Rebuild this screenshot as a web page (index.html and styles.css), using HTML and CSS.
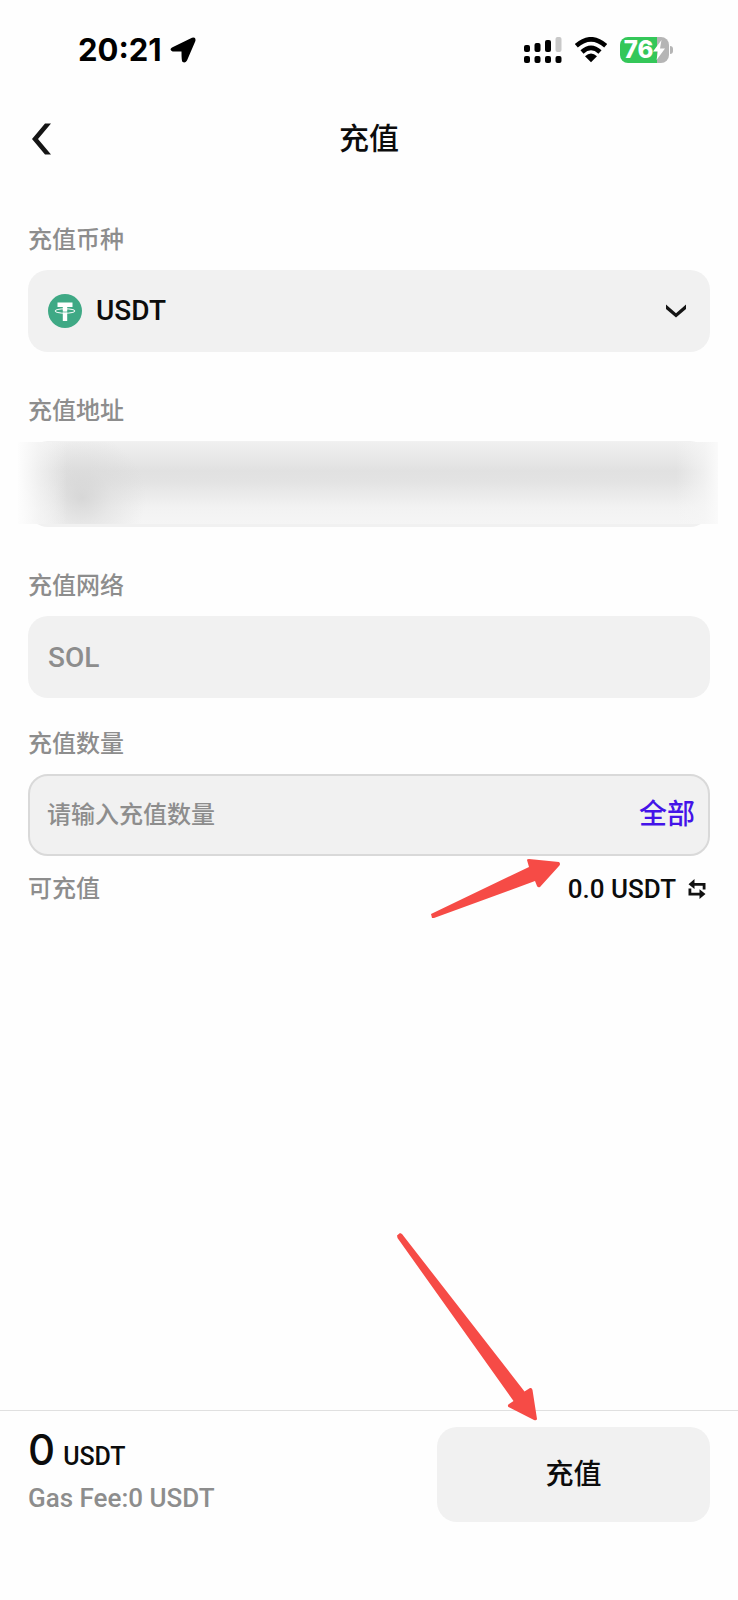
FILE: index.html
```html
<!DOCTYPE html>
<html lang="zh-CN">
<head>
<meta charset="utf-8">
<meta name="viewport" content="width=device-width, initial-scale=1">
<title>充值</title>
<link rel="stylesheet" href="styles.css">
</head>
<body>
<div class="page">
  <div class="status">
    <div class="status-left">
      <span>20:21</span>
      <svg width="26" height="26" viewBox="0 0 26 26" aria-hidden="true"><path d="M2 10.500 22 .8Q26.200-.3 25.400 4L17 23.600Q15 26.600 12.400 24.800Q11.500 24 11.500 14.500H2.600Q-1.200 13 2 10.500Z"/></svg>
    </div>
    <div class="status-right">
      <svg width="38" height="26" viewBox="0 0 38 26" aria-hidden="true">
        <rect x="0" y="8" width="6" height="7" rx="2"/><rect x="10.500" y="6" width="6" height="9" rx="2"/><rect x="21" y="3" width="6" height="12" rx="2"/><rect x="31.500" y="0" width="6" height="15" rx="2" fill="#c8c8c8"/>
        <rect x="0" y="19" width="6" height="7" rx="2"/><rect x="10.500" y="19" width="6" height="7" rx="2"/><rect x="21" y="19" width="6" height="7" rx="2"/><rect x="31.500" y="19" width="6" height="7" rx="2"/>
      </svg>
      <svg width="34" height="26" viewBox="0 0 34 26" aria-hidden="true">
        <path d="M2.300 8.800Q17-4.200 31.700 8.800M8 15Q17 6.800 26 15" fill="none" stroke="#000" stroke-width="4.600"/>
        <path d="M11 19.200Q17 14 23 19.200L17 25.200Z"/>
      </svg>
      <div class="battery">
        <span class="battery-body">76<svg width="12" height="20" viewBox="0 0 12 20" aria-hidden="true"><path d="M8.500 0 0 11.500H5L3.500 20 12 8.500H7Z" fill="#fff"/></svg></span>
        <span class="battery-tip"></span>
      </div>
    </div>
  </div>

  <header class="header">
    <button class="back" type="button" aria-label="返回"><svg width="20" height="32" viewBox="0 0 20 32" aria-hidden="true"><path d="M13 .5H19L6 16 19 31.500H13L0 16Z" fill="#151515"/></svg></button>
    <h1 class="title">充值</h1>
  </header>

  <main class="form">
    <div class="group">
      <label class="label" for="coin">充值币种</label>
      <div class="field coin-field">
        <svg width="34" height="34" viewBox="0 0 34 34" aria-hidden="true">
          <circle cx="17" cy="17" r="17" fill="#3fa985"/>
          <path d="M9.500 8.500H24.500V13H19.200V27H14.800V13H9.500Z" fill="#fff"/>
          <ellipse cx="17" cy="17" rx="10" ry="2.200" fill="none" stroke="#fff"/>
          <path d="M13.500 17.800Q17 18.300 20.500 17.800" fill="none" stroke="#3fa985" stroke-width=".7"/>
        </svg>
        <select class="control select" id="coin"><option>USDT</option></select>
        <svg class="chevron" width="20" height="14" viewBox="0 0 20 14" aria-hidden="true"><path d="M0 .5 10 9.200 20 .5V5L10 13.500 0 5Z" fill="#151515"/></svg>
      </div>
    </div>

    <div class="group">
      <label class="label" for="address">充值地址</label>
      <div class="field address-field">
        <input class="control" id="address" type="text" readonly>
        <div class="mask"></div>
      </div>
    </div>

    <div class="group">
      <label class="label" for="network">充值网络</label>
      <div class="field">
        <input class="control muted" id="network" type="text" value="SOL" readonly>
      </div>
    </div>

    <div class="group amount-group">
      <label class="label" for="amount">充值数量</label>
      <div class="field amount-field">
        <input class="control amount" id="amount" type="text" inputmode="decimal" placeholder="请输入充值数量">
        <button class="all" type="button">全部</button>
      </div>
      <div class="balance">
        <span class="label">可充值</span>
        <button class="available" type="button">
          <span>0.0 USDT</span>
          <svg width="18" height="20" viewBox="0 0 18 20" aria-hidden="true"><path d="M6.500 0V4H17.500V10.500H14.700V6.700H6.500V10L.5 5.200ZM.5 9.500H3.300V13.700H11.500V10.200L17.500 15 11.500 20V16.500H.5Z" fill="#111"/></svg>
        </button>
        <svg class="arrow arrow-amount" width="129" height="60" viewBox="0 0 129 60" aria-hidden="true"><path d="M0 55 98 8 96 1Q96 0 98 0L128 3Q130 5 128 7L109 28Q107 29 106 27L104 22 3 59 1 59Z"/></svg>
      </div>
    </div>
  </main>

  <footer class="footer">
    <div class="summary">
      <div class="total"><span class="total-value">0</span><span>USDT</span></div>
      <div class="fee">Gas Fee:0 USDT</div>
    </div>
    <div class="action">
      <button class="submit" type="button">充值</button>
      <svg class="arrow arrow-submit" width="141" height="188" viewBox="0 0 141 188" aria-hidden="true"><path d="M0 2.500 3 0 5 1 127.500 158.500 133 155Q135 154.500 135.500 157L140 186Q139.500 188 137 187L111.500 174Q110 172.500 112 171L116.500 168 .5 5Z"/></svg>
    </div>
  </footer>
</div>
</body>
</html>
```

FILE: styles.css
```css
* {
  box-sizing: border-box;
}

body {
  margin: 0;
  background: #fefefe;
  color: #0c0c0c;
  font-family: Roboto, "Noto Sans CJK SC", sans-serif;
  font-size: 24px;
  font-weight: 500;
  line-height: 36px;
}

button,
input,
select {
  margin: 0;
  padding: 0;
  border: 0;
  background: none;
  color: inherit;
  font: inherit;
  border-radius: 0;
}

svg {
  display: block;
  flex: none;
}

.page {
  display: flex;
  flex-direction: column;
  min-height: 100vh;
}

/* Status bar */
.status {
  display: flex;
  align-items: center;
  justify-content: space-between;
  height: 100px;
  padding: 0 65px 0 78px;
  color: #000;
  font-family: Inter, sans-serif;
  font-weight: 700;
}

.status-left {
  display: flex;
  align-items: center;
  gap: 8px;
  font-size: 31px;
}

.status-right {
  display: flex;
  align-items: center;
  gap: 12px;
}

.battery {
  display: flex;
  align-items: center;
  gap: 1px;
}

.battery-body {
  display: flex;
  align-items: center;
  justify-content: center;
  width: 49px;
  height: 26px;
  border-radius: 8px;
  background: linear-gradient(90deg, #34c759 76%, #b5b5b5 76%);
  color: #fff;
  font-size: 24px;
  font-weight: 800;
  line-height: 26px;
}

.battery-tip {
  width: 3px;
  height: 8px;
  border-radius: 0 4px 4px 0;
  background: #b5b5b5;
}

/* Header */
.header {
  display: grid;
  grid-template-columns: 1fr auto 1fr;
  align-items: center;
  height: 78px;
  padding: 0 32px;
}

.back {
  justify-self: start;
  cursor: pointer;
}

.title {
  margin: 0;
  font-size: 30px;
  font-weight: 500;
  line-height: 44px;
}

/* Form */
.form {
  display: flex;
  flex: 1;
  flex-direction: column;
  gap: 41px;
  padding: 44px 28px 40px;
}

.group {
  display: flex;
  flex-direction: column;
  gap: 12px;
}

.amount-group {
  margin-top: -13px;
}

.label,
.muted,
.fee {
  color: #8d8d8d;
}

.field {
  display: flex;
  align-items: center;
  gap: 14px;
  min-height: 82px;
  padding: 0 20px;
  border-radius: 20px;
  background: #f1f1f1;
}

.control {
  flex: 1;
  min-width: 0;
  height: 48px;
  font-size: 28px;
  outline: 0;
}

.coin-field {
  padding-right: 24px;
}

.select {
  appearance: none;
}

.address-field {
  position: relative;
  min-height: 86px;
}

/* Soft cover that hides the address */
.mask {
  position: absolute;
  inset: 1px -8px 3px -10px;
  background:
    linear-gradient(90deg, #fdfdfd, rgba(246, 246, 246, .7) 3%, rgba(236, 236, 236, 0) 7%, rgba(236, 236, 236, 0) 94%, rgba(246, 246, 246, .7) 98%, #fafafa),
    radial-gradient(64px 64px at 64px 56px, rgba(206, 206, 206, .7), rgba(214, 214, 214, .4) 45%, rgba(226, 226, 226, 0)),
    linear-gradient(#f0f0f0, #e1e1e1 35%, #e3e3e3 48%, #f2f2f2 80%, #f5f5f5);
}

.amount-field {
  padding: 0 13px 0 17px;
  border: 2px solid #d9d9d9;
}

.amount {
  font-size: 24px;
}

.amount::placeholder {
  color: #8d8d8d;
  opacity: 1;
}

.all {
  color: #4413e8;
  font-size: 28px;
  cursor: pointer;
}

.balance {
  position: relative;
  display: flex;
  align-items: center;
  justify-content: space-between;
  margin-top: 3px;
}

.available {
  display: flex;
  align-items: center;
  gap: 12px;
  padding-right: 4px;
  font-size: 26px;
  cursor: pointer;
}

/* Pointer arrows */
.arrow {
  position: absolute;
  fill: #f64b46;
  pointer-events: none;
}

.arrow-amount {
  right: 150px;
  bottom: -12px;
}

.arrow-submit {
  left: -40px;
  bottom: calc(100% + 6px);
}

/* Footer */
.footer {
  display: flex;
  justify-content: space-between;
  padding: 16px 28px 78px;
  border-top: 1px solid #e0e0e0;
}

.total {
  display: flex;
  align-items: baseline;
  gap: 8px;
  font-size: 25px;
  line-height: 46px;
}

.total-value {
  font-family: Inter, sans-serif;
  font-size: 42px;
  line-height: 46px;
}

.fee {
  font-size: 26px;
}

.action {
  position: relative;
  width: 40%;
}

.submit {
  width: 100%;
  height: 95px;
  border-radius: 20px;
  background: #f1f1f1;
  font-size: 28px;
  cursor: pointer;
}
```
